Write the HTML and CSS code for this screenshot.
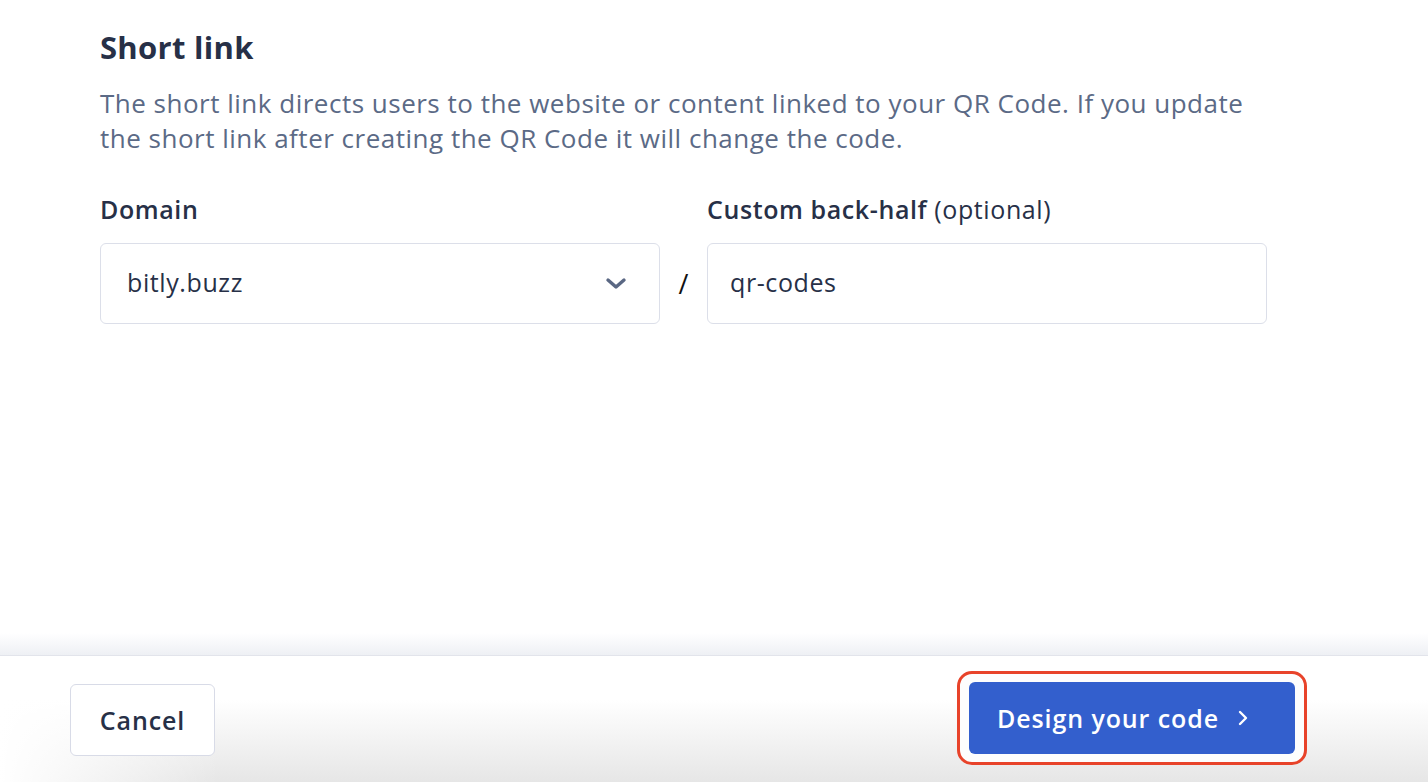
FILE: index.html
```html
<!DOCTYPE html>
<html lang="en">

<head>
    <meta charset="UTF-8">
    <meta name="viewport" content="width=device-width, initial-scale=1.0">
    <title>Short link</title>
    <link rel="stylesheet" href="styles.css">
</head>

<body>
    <div class="page">
        <div class="content">
            <h2 class="title">Short link</h2>
            <p class="intro">The short link directs users to the website or content linked to your QR Code. If you update
                the short link after creating the QR Code it will change the code.</p>

            <div class="fields">
                <div class="field">
                    <label class="label">Domain</label>
                    <div class="select">
                        <span>bitly.buzz</span>
                        <svg class="chevron" width="22" height="14" viewBox="0 0 22 14">
                            <path d="M3 3 L11 10 L19 3" fill="none" stroke="#5a6783" stroke-width="3.4" stroke-linecap="round" stroke-linejoin="round" />
                        </svg>
                    </div>
                </div>
                <div class="slash">/</div>
                <div class="field">
                    <label class="label">Custom back-half <span class="optional">(optional)</span></label>
                    <div class="input">qr-codes</div>
                </div>
            </div>
        </div>

        <div class="footer">
            <button class="btn btn-cancel">Cancel</button>
            <div class="highlight-ring">
                <button class="btn btn-primary">
                    Design your code
                    <svg width="14" height="20" viewBox="0 0 14 20">
                        <path d="M4 4 L10 10 L4 16" fill="none" stroke="#fff" stroke-width="2.4" stroke-linecap="round" stroke-linejoin="round" />
                    </svg>
                </button>
            </div>
        </div>
    </div>
</body>

</html>
```

FILE: styles.css
```css
body {
    margin: 0;
    font-family: "Open Sans", "Noto Sans", sans-serif;
    background-color: #fff;
    color: #273047;
}

.page {
    height: 782px;
    display: flex;
    flex-direction: column;
    overflow: hidden;
}

.content {
    flex: 1;
    padding: 27px 0 0 100px;
    background: linear-gradient(to bottom, #fff calc(100% - 22px), #eef0f4 100%);
}

.title {
    margin: 0;
    font-size: 31px;
    line-height: 40px;
    font-weight: 700;
    letter-spacing: 0.3px;
    color: #273047;
}

.intro {
    margin: 19px 0 0;
    width: 1180px;
    font-size: 26px;
    line-height: 35px;
    letter-spacing: 0.5px;
    color: #5b6a86;
}

.fields {
    display: flex;
    align-items: flex-end;
    margin-top: 37px;
}

.field {
    display: flex;
    flex-direction: column;
    width: 560px;
}

.label {
    font-size: 25px;
    font-weight: 600;
    line-height: 32px;
    letter-spacing: 0.6px;
    margin-bottom: 18px;
}

.optional {
    font-weight: 400;
}

.select,
.input {
    box-sizing: border-box;
    height: 81px;
    border: 1px solid #dcdfe9;
    border-radius: 6px;
    display: flex;
    align-items: center;
    padding: 0 26px 3px;
    font-size: 25px;
    letter-spacing: 0.6px;
    color: #273047;
}

.input {
    padding-left: 22px;
}

.select {
    justify-content: space-between;
    padding-right: 32px;
}

.chevron {
    margin-top: 4px;
}

.slash {
    width: 47px;
    height: 81px;
    display: flex;
    align-items: center;
    justify-content: center;
    font-size: 27px;
    color: #111;
}

.footer {
    height: 126px;
    border-top: 1px solid #e2e4eb;
    display: flex;
    align-items: center;
    justify-content: space-between;
    padding: 0 121px 0 70px;
    background:
        linear-gradient(to right, #fff 0, rgba(255, 255, 255, 0) 220px),
        linear-gradient(to bottom, #fff 35%, #e6e6e6 100%);
}

.btn {
    font-family: "Open Sans", "Noto Sans", sans-serif;
    font-size: 25px;
    font-weight: 600;
    letter-spacing: 0.9px;
    height: 72px;
    border-radius: 6px;
    cursor: pointer;
}

.btn-cancel {
    width: 145px;
    background-color: #fff;
    border: 1px solid #d8dbe7;
    color: #273047;
    margin-top: 1px;
}

.highlight-ring {
    border: 3px solid #e8432a;
    border-radius: 15px;
    padding: 8px 9px;
    margin-top: -2px;
    background-color: #fdfdfd;
}

.btn-primary {
    width: 326px;
    display: flex;
    align-items: center;
    gap: 17px;
    background-color: #335fcd;
    border: none;
    color: #fff;
    padding: 0 0 0 28px;
}
```
